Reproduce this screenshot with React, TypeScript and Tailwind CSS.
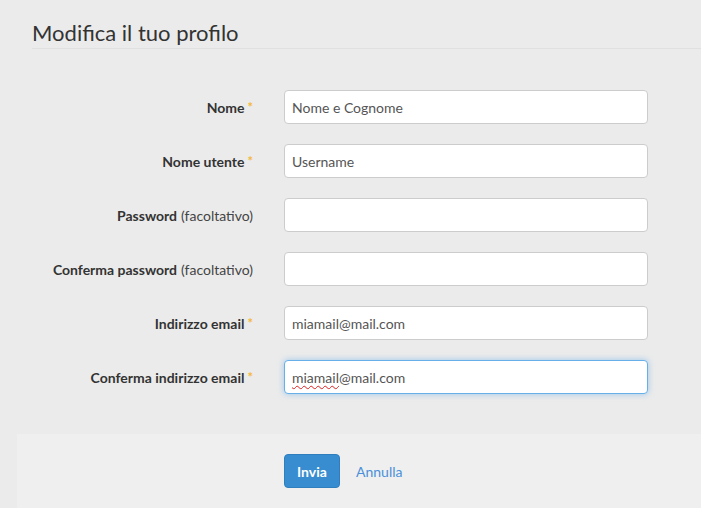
import React from "react"

type Field = {
  label: string
  optional?: boolean
  required?: boolean
  value?: string
  focused?: boolean
}

const FIELDS: Field[] = [
  { label: "Nome", required: true, value: "Nome e Cognome" },
  { label: "Nome utente", required: true, value: "Username" },
  { label: "Password", optional: true },
  { label: "Conferma password", optional: true },
  { label: "Indirizzo email", required: true, value: "miamail@mail.com" },
  { label: "Conferma indirizzo email", required: true, value: "miamail@mail.com", focused: true },
]

function FieldRow({ field }: { field: Field }) {
  return (
    <div className="flex items-center h-[34px]">
      <label className="w-[254px] pr-[1px] flex justify-end items-center text-[14px] text-[#333]">
        <span className="font-bold">{field.label}</span>
        {field.optional && <span className="ml-[4px] text-[#444]">(facoltativo)</span>}
        {field.required && (
          <span className="ml-[3px] text-[13px] font-bold text-[#f4b83a] self-start mt-[4px] leading-none">*</span>
        )}
      </label>
      {field.focused ? (
        // focused field, with the spellcheck squiggle on "miamail"
        <div className="ml-[30px] w-[364px] h-[34px] flex items-center px-[7px] bg-white rounded-[4px] border border-[#66afe9] shadow-[0_0_6px_rgba(102,175,233,0.6)] text-[14px] text-[#555]">
          <span className="underline decoration-wavy decoration-[#e02020] decoration-[1px] underline-offset-[2px]">
            miamail
          </span>
          <span>@mail.com</span>
        </div>
      ) : (
        <input
          type={field.label.toLowerCase().includes("password") ? "password" : "text"}
          defaultValue={field.value}
          className="ml-[30px] w-[364px] h-[34px] px-[7px] bg-white rounded-[4px] border border-[#ccc] text-[14px] text-[#555] outline-none"
        />
      )}
    </div>
  )
}

export default function App() {
  return (
    <div
      className="w-[701px] h-[508px] overflow-hidden bg-[#ebebeb] flex flex-col"
      style={{ fontFamily: "Lato, 'Open Sans', sans-serif" }}
    >
      {/* Page header */}
      <div className="ml-[32px] h-[49px] border-b border-[#e0e0e0] flex items-end pb-[0px]">
        <h1 className="text-[22px] font-normal text-[#333] leading-[30px]">Modifica il tuo profilo</h1>
      </div>

      {/* Form rows */}
      <form className="flex flex-col gap-[20px] pt-[41px]">
        {FIELDS.map((f) => (
          <FieldRow key={f.label} field={f} />
        ))}
      </form>

      {/* Actions */}
      <div className="mt-[40px] ml-[17px] flex-1 bg-[#efefef] pt-[20px] pl-[267px] flex items-start gap-[16px]">
        <button className="h-[34px] w-[56px] rounded-[4px] bg-[#378dd0] border border-[#2f7fbf] text-white font-bold text-[14px]">
          Invia
        </button>
        <a href="#" className="h-[34px] flex items-center text-[14px] text-[#4a90d9]">
          Annulla
        </a>
      </div>
    </div>
  )
}
